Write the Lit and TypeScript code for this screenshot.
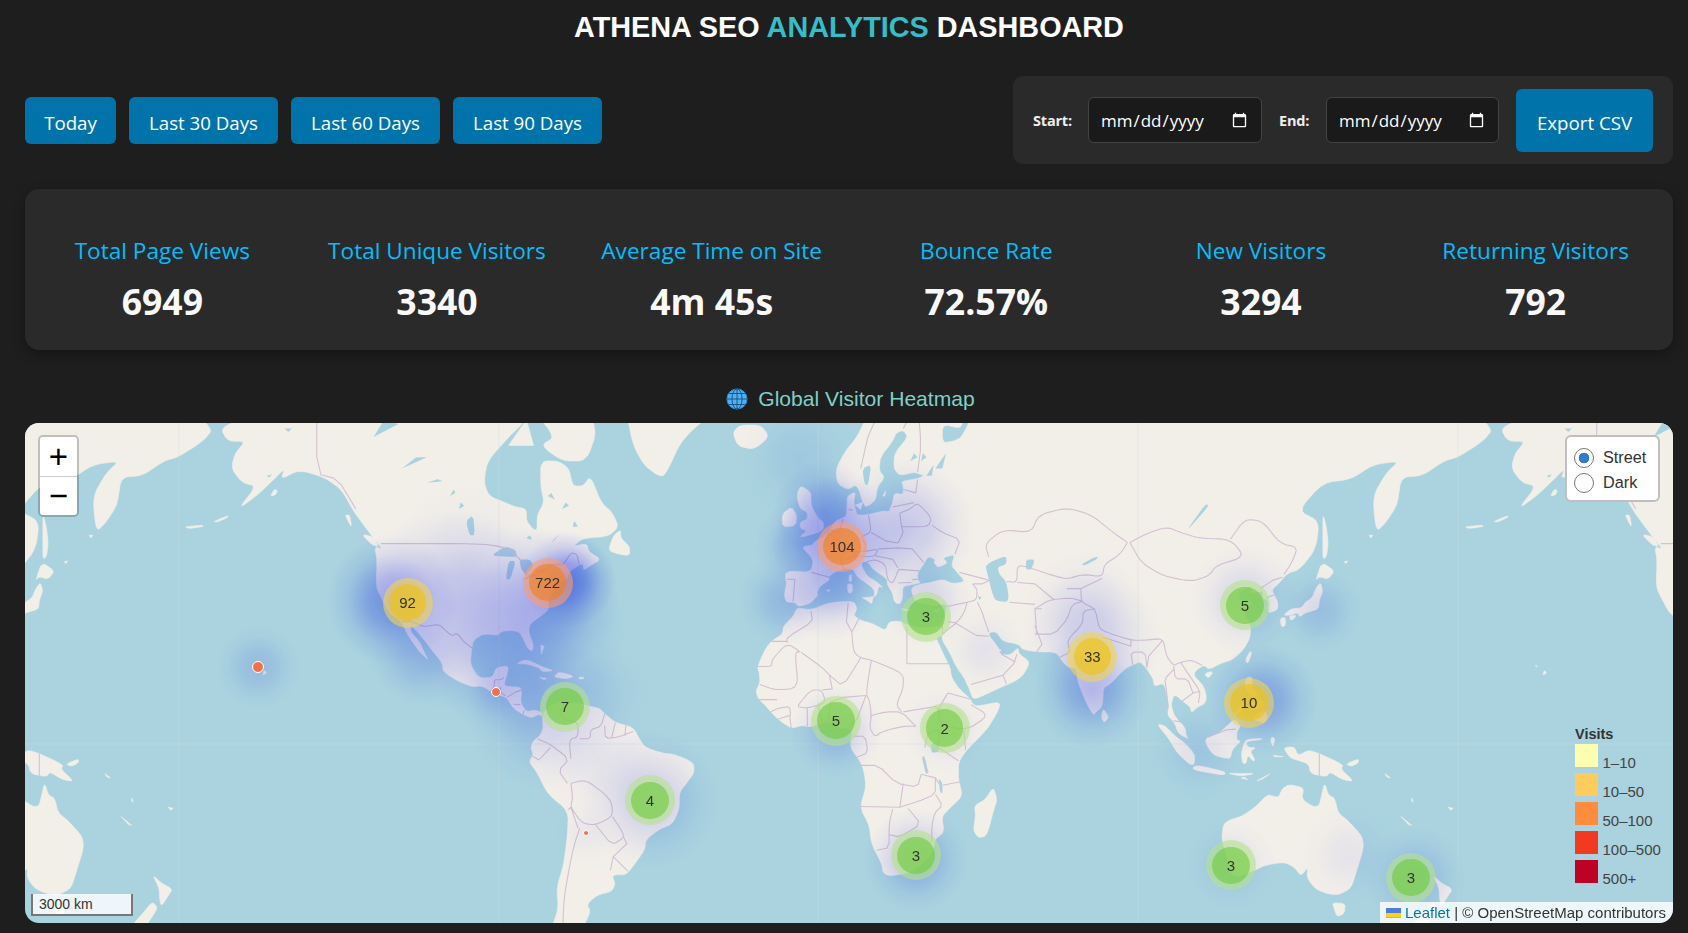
import { LitElement, html, css, svg } from "lit";
import { customElement } from "lit/decorators.js";

type P = number[];
const flat = (a: number[]): P[] => {
  const o: P[] = [];
  for (let i = 0; i < a.length; i += 2) o.push([a[i], a[i + 1]]);
  return o;
};

const LAND: number[][] = [
  // North America
  [-168,66,-163,67,-166,69,-156,71.5,-141,70,-125,70,-110,68,-95,68,-90,70,-85,70,-82,67,-87,65,-93,62,-94,59,-92.5,57,-88,56,-85,55.3,-82,55,-82,53,-80,51.5,-79,51.5,-79,54,-77,56,-78,58.5,-78,62,-73,62,-70,61,-69,58.5,-66,58.5,-64,60,-61,56,-58,54.5,-56,52,-59,50.3,-66,50,-69,48.5,-65,49,-64.5,47.5,-61,46,-64,44.8,-66,43.8,-66,45,-67,45,-70,43.5,-70.5,42,-74,40.7,-75,38.5,-76,37,-75.7,35.3,-78,33.8,-81,32,-81.4,30,-80,26.8,-80.4,25.2,-81.7,26,-82.7,28,-84,30,-86,30.4,-89,30.2,-90,29.2,-94,29.6,-97,28,-97.5,25,-97.8,22,-96,19,-94.5,18.2,-91.5,18.5,-90.5,21,-87,21.5,-87.5,19,-88.5,16,-84,15.8,-83.3,15,-83.7,11.5,-82,9,-79.5,9.5,-77.3,8.7,-77.5,7.5,-78.5,8.4,-80.5,7.3,-83,8.3,-85.7,10,-87.5,13,-91,13.9,-94.5,16.2,-97,15.8,-101.5,17.5,-105.5,20,-105.5,22,-109,26,-112.5,30,-114.7,31.7,-114.5,30,-112,27.5,-110.3,24,-109.5,23,-112,25,-114,27.5,-115.5,29.5,-117.1,32.5,-120.5,34.5,-122.5,37.5,-124.3,40.3,-124,46,-124.7,48.4,-122.5,48,-125,50,-128,52.5,-130.5,54.5,-134,58,-139,59.8,-146,60.8,-151,59.5,-150,61,-154,59,-158,57,-163,55,-158,58.5,-162,59,-165,61,-164,63,-161,64.5,-166,64.5],
  // Greenland, Iceland, Baffin, Southampton, Newfoundland, Vancouver Is.
  [-45,60,-43,60,-38,65,-25,69,-20,75,-60,76,-54,68,-52,64,-49,61.5],
  [-24,65.5,-22,66.4,-16,66.4,-13.7,65,-18,63.5,-22.5,63.9],
  [-78,64,-72,62,-65,62,-62,66,-68,70,-80,72,-90,72,-80,68,-74,65],
  [-87,64,-80,64,-82,67],
  [-59,47.7,-56,47,-53,46.7,-53,48.5,-55.5,50,-55.5,51.5,-57.5,50.5],
  [-128.3,50.7,-125,50.2,-123.5,48.4,-125.5,48.8],
  [-133,54,-131.7,54,-131.2,52,-132,52.8],
  [-64.5,46.9,-62,46.4,-64,46.2],
  // Caribbean
  [-85,22,-82,23.2,-77,21,-74.2,20.2,-77.5,19.9,-78.5,21,-82,22],
  [-74.4,18.5,-72.8,19.9,-68.5,18.7,-71,18],
  [-78.3,18.4,-76.3,18.2,-77,17.8],
  [-67.2,18.5,-65.7,18.4,-66,18,-67.2,18],
  [-78,26.8,-77,26.5,-77.8,24.5],
  // South America
  [-77.3,8.7,-75.5,10.7,-72,12,-71.5,11,-68,11.5,-64,10.5,-61.5,10,-60,8.5,-57,6,-52,4.7,-50,1,-48.5,-1,-44,-2.5,-40,-3,-35,-5.2,-34.8,-8,-37,-11,-39,-13.5,-39,-18,-41,-22,-44.5,-23.2,-48.5,-26,-48.7,-28.5,-52,-32.5,-54,-34.5,-58,-34.5,-57,-36.5,-58,-38.3,-62,-39,-65,-41,-64,-42.5,-65.5,-45,-67,-46,-66,-48,-68.5,-50,-69,-52,-65,-55,-70,-55,-74,-52,-75.5,-47,-73,-42,-73.5,-37.5,-71.5,-32,-70.5,-25,-70.2,-18.5,-76,-14,-79,-8,-81.3,-5,-80,-3,-80.8,-1,-80,1,-78.5,2,-77.3,4,-77.5,7.5],
  // Africa
  [-5.9,35.8,-2,35.2,3,36.9,10,37.3,11,35.5,10,34,12,32.8,15.5,32,19,30.3,20,32.5,23,32.7,25,31.7,29,31,32.3,31.2,34.2,31.3,32.5,30,33.6,27.8,35.5,24,37.2,21,37.5,18.5,39.5,15.5,43,12.5,43.3,11.5,44.5,10.5,51.2,11.8,50.8,9.5,47.5,4,42,-1.5,39.5,-5,39.5,-10,40.7,-14.5,37,-17.8,34.8,-20,35.5,-24,32.8,-26,32.5,-28.5,30,-31.5,26,-34,20,-34.8,18.3,-34,18,-32,15,-27,14.5,-22.5,11.8,-17.5,13.5,-12,13,-8,12,-5,9,-1,9.7,3.5,8.5,4.6,6,4.3,4.5,6.3,1,5.9,-2,4.8,-4.5,5.2,-7.5,4.4,-11,6.7,-13.3,9,-15,11,-16.7,12.5,-17.5,14.7,-16.3,17,-16.5,19.5,-17,21,-16,23.5,-14.5,26.2,-13,27.8,-10,29.5,-9.7,31.5,-7,33.7],
  [49.3,-12,50.4,-15.5,49.5,-18,47.5,-25,45,-25.5,43.7,-23.5,44.3,-20,44,-17,47,-15.5],
  // Eurasia
  [-9.3,43,-8,43.7,-2,43.4,-1.2,46,-4.7,48.4,-1.5,48.7,-1,49.4,1.5,50.2,3.5,51.4,4.7,53,8,53.7,8.2,55.5,8.2,57,10.6,57.7,10,56,10.8,54.4,11,54,14,54,18.5,54.7,20,54.5,21,56,21.5,57.5,24,57.2,24,58.5,23.5,59.2,28,59.6,30,60,27,60.5,23,60,21.3,61,21.5,63,25.3,65,24,65.8,22,65.5,21,64.5,17.5,62.5,17.2,60.7,18.8,59.8,16.6,58.3,16.3,56.5,14.3,55.5,13,55.4,11,58.8,8.5,58,5.5,58.8,5,61,8,63.5,11,65,14.5,68,19,70,25,71,31,70,41,67,40,66,35,66.5,35,64.3,38,64.5,40.5,65,44,68,55,69,68,69,75,72,100,78,140,73,180,69,190,66,187,64.5,180,62.5,176,62,170,60,164,59.8,163,56,162,54.8,160,53,157,51,156,57,160,60.5,163.5,62,156,61.5,150,59.5,142,59,135,54.7,141,53,140,48,135.5,44,132,43.2,129.5,41,127.5,39.7,129.4,37,129.2,35.2,126.5,34.5,126.7,37.5,125,38,125.3,39.5,121.5,39,122,40.7,118,39,119,37.3,122.5,37,119.5,35,121.7,31.5,121.5,28.5,119.5,25.5,116.5,23,113.5,22.2,110,20.5,108.5,21.7,106,20,105.8,18.8,108.5,16,109.3,13,108.8,11.3,106.7,10.3,105,8.7,104.8,10.3,102.5,12,100.9,13.4,100,13.5,99.3,11,100,8.5,101,7,103.3,4.5,103.5,2.5,104.2,1.4,101.3,3,100.3,6,98.3,8,98.7,11,97.7,15.7,97,16.8,94.5,16,94.3,18,92,21.3,90.5,22.5,88.5,21.7,86.8,21,85,19.5,82.3,16.7,80.2,15.5,80.2,13,79.8,10.3,78.2,9,77.5,8.1,76,10.5,74.8,13,73,17.5,72.8,20.8,70.5,21,69,22.3,68,23.7,66.7,25,61.5,25.1,57.5,25.7,56.5,27,52,27.7,50.2,30,48.5,30,48,29.3,50,27,51.5,25,51.2,26,51,24.5,54,24.2,56.3,26.2,56.5,24.5,59.7,22.5,57.7,19,55.3,17.3,52,16,45,12.8,43.5,12.7,42.7,15,41,18.5,39,21,37,25,34.9,28,34.9,29.5,33,28.2,32.6,29.9,32.3,31.2,34.2,31.3,35,32.8,36,34.7,36,36.8,32.5,36.1,30.5,36.7,27.5,37,26.3,39.3,26.5,40.3,29,41,31,41.2,35,42,38,41,41.5,41.5,39,43.5,37.5,44.8,38.5,47,35,46.3,36.5,45.3,33.7,44.4,32.6,45.4,33,46,31,46.6,29.7,45,28,43.3,28,41.8,29,41.2,26.2,40.8,23.8,40.5,23.8,38,23,36.5,21.5,37,21,39,19.4,41,19.5,42,15.5,44,14.3,45.3,13.5,45.6,12.3,45.4,12.3,44.5,14,42.5,16,41.7,18.4,40.2,17,40.5,16.6,38.8,15.7,38,16,39.5,14.5,40.7,11,42.5,10,44,8,44.3,4.5,43.4,3,42.5,3.2,41.8,0.5,40.5,-0.4,39,0,38.6,-2,36.8,-5.5,36,-6.5,37,-9,37,-9.5,38.7,-8.8,41],
  // Europe islands
  [-5.5,50,1.3,51.2,1.7,52.7,0,53.5,-1.5,55,-2,56,-2,57.6,-5,58.6,-6,57,-5,55,-3,54.5,-3,53.3,-5,52.8,-5,51.7,-3,51.3],
  [-10,52,-6.3,52.2,-6,54,-7.5,55.3,-10,54.2],
  [12.5,38,15.6,38.2,15.1,36.7],
  [8.2,41,9.7,41,9.6,39.2,8.5,39],
  [8.7,42.7,9.5,43,9.4,41.5,8.8,41.5],
  [23.5,35.5,26.2,35.2,24.7,35],
  [32.4,35,34.5,35.6,33.7,34.7],
  [2.4,39.6,3.4,39.8,3,39.3],
  [18.2,57,19,57.8,18.8,57],
  [10.5,55.6,12.5,56,12,54.9],
  // Japan etc.
  [130.9,34,133,35.5,136,35.7,137,37,139,38,140,40,141.3,41.3,142,39.5,141,37.5,140.8,35.5,139,35,136.8,34.5,135.5,33.6,135,34.6,132.5,34],
  [140,41.8,141.7,45.4,145.3,43.7,143.5,42,141,42.5],
  [130,33.3,131.5,33.5,131.4,31.5,130.3,31.3],
  [132.5,33.9,134.5,34,134,33.3,133,32.8],
  [142,54.2,143,52,143.5,49,143,46.5,142,46,142,50],
  [121.5,25.2,122,24.8,120.9,22,120.2,23],
  [108.7,19.3,110.5,20,111,19.5,109.7,18.2],
  // Philippines
  [120.5,18.5,122.2,18.4,122,16,124,13,121.5,13.7,120,16],
  [122,7,123.5,8.5,125.5,9.8,126.5,7.5,125.5,5.8,124,6.5],
  [122,11.7,125,12.5,125.5,10.5,123,9.5],
  [117.2,8.4,119.5,11.3,119.7,10.5,117.7,8.3],
  // Indonesia
  [95.3,5.6,97.5,5.2,100.5,2.2,103.5,0,106,-3,105.8,-5.8,104.5,-5.7,101,-2.5,98.5,1.7],
  [105.2,-6.8,106.5,-6,110.5,-6.8,114.5,-7.8,114.4,-8.7,110,-8.1,106.5,-7.4],
  [109,1.5,111.3,2.5,113,3.2,115.5,5.5,117,7,119,5.2,117.8,3.5,117.8,1,119,0.9,116.5,-1.5,116,-4,114.5,-4,111.5,-3.2,110,-1.5,109.2,0],
  [119.5,-5.5,120.4,-5.5,120.9,-3,122.5,-5,122.8,-4.2,121.5,-2,123.3,-1,121,-1,120.2,0.7,124.5,1.2,125,1.6,120.5,1.3,119.7,0,119,-3],
  [115,-8.2,119,-8.3,123,-8.3,119,-9],
  [123.5,-10.3,127,-8.4,125,-9.8],
  [119,-9.5,120.8,-10,120,-9.3],
  [127.5,2,128.5,1.5,128,-0.8,127.4,0.5],
  [128,-3.2,130.8,-3.5,128.5,-3.6],
  [131,-1,134,-0.8,135,-3.3,138,-1.7,141,-2.7,145,-4.5,147.8,-6,147,-7,150.8,-10.5,147.5,-10,144,-7.8,143,-9.2,138.5,-8.3,138,-5.5,133,-4,132,-2.8],
  [148.5,-5.6,152,-4.2,152,-5.3,150,-6.3],
  [79.8,8.5,80.3,9.8,81.8,7.5,80.5,6,79.9,7],
  // Oceania
  [114,-22,113.5,-26,115,-30,115.7,-34,118,-35,124,-33,126,-32.2,131,-31.5,134,-32.7,135.8,-34.8,137.8,-32.7,137.5,-35.2,140,-37.8,143.5,-38.8,146.5,-39,150,-37.5,151.5,-33.5,153.5,-28,153,-25,149,-21,146.3,-19,145.3,-15,143.5,-14.2,142.5,-10.8,141.7,-14,141,-17,139.5,-17.5,136,-15.3,136.7,-12.2,132.5,-11.3,130.5,-12.5,129.5,-15,126.5,-14,124,-16.5,122.2,-18,119,-20,116,-20.8],
  [144.7,-40.7,148.3,-40.9,148,-43,146,-43.6,145.2,-42],
  [172.8,-34.5,175.5,-36.5,178.5,-37.7,177,-39.5,175.3,-41.5,174.8,-39.8,174.7,-37.5],
  [172.7,-40.5,174.3,-41.7,172.7,-43.7,171,-45.5,168,-46.7,166.5,-45.8,170,-43],
  [164,-20,167,-22.3,166,-22],
  [177.2,-17.5,178.6,-17.8,178,-18.3],
  [167,-15,167.4,-16,167,-16],
  [159.5,-8.3,161,-9.5,160,-9.2],
  [-156,19,-155,19.7,-155.8,20.2,-156,19.5],
  [-158.2,21.6,-157.7,21.3,-158.1,21.3],
  // Aleutians & Kurils
  [-170,52.9,-166,53.9,-166,53.6,-169,52.8],
  [-178,52,-173,52.3,-173,52,-177,51.7],
  [155,50.5,156,50.5,155.5,50],
  [148,45.5,149,45.7,148.5,45.2],
  [-153,58,-152,57.9,-152.5,57.2,-154,57],
];

const WATER: number[][] = [
  [-92,46.7,-88,48.5,-85,47.8,-84.7,46.5,-87,46.5],
  [-87.8,42,-86.5,42,-85,45.7,-87,45.7],
  [-84,46,-81,46,-80,44.7,-82,43,-83.5,44],
  [-83.3,41.7,-79,42.8,-79,43,-81.5,42.7],
  [-79.7,43.3,-76.3,43.5,-76.5,44.2,-79,43.9],
  [-98,50.5,-96.5,50.5,-97,54,-99,53],
  [-117,61,-110,62.5,-113,62.5],
  [-125,65,-118,66.5,-122,67],
  [-110,59,-105.5,59.2,-107,59.5],
  [-75,49,-73,50.5,-72,51,-74,50],
  [-103.5,57,-102,57.5,-102.5,58],
  [-101,55,-99.5,55.5,-100.5,56],
  [-72,55,-70,55.5,-71,56],
  [-76,57,-74,56.5,-75,57.5],
  [-69,52,-67.5,52,-68.5,53],
  [-82,50,-80.5,49.7,-81,50.5],
  [-155,60,-153.5,60.2,-154.5,59.7],
  [-150,66,-148,66,-149,65.6],
  [47,45,53,46.8,53,45,50.5,44.5,51,43,53,41.5,53.8,37,50,37.3,49,39,47.7,43],
  [58.5,46,61,46,60,44,58.5,44],
  [74,45,78,46.5,79,46.3,75,44.8],
  [104,51.5,110,55.5,109,55.8,105,52.5],
  [31.7,0.2,34,0.3,34,-2.2,32,-2.5],
  [29.2,-3.5,30,-3.5,31,-8,30.3,-8.5],
  [34,-9.5,35,-11,35,-14,34.2,-13],
  [12.5,61,15,61.5,14,58.5,13,59],
  [30.5,60,32.5,61.5,32,60],
  [33,61,36,63,35,61],
  [45,38.5,46,38,45.3,37.5],
  [26,62,28,62.5,27,63],
  [29,62,30.5,62.5,29.5,63],
];

const BORDERS: number[][] = [
  [-123,49,-95,49,-88,48.3,-84.5,46.5,-82.5,45,-82.5,42.8,-79,43,-76,44.3,-74.7,45,-71.5,45,-69.5,47.3,-67.8,47,-67.2,45],
  [-141,70,-141,60.3,-135,59.5,-130,55],
  [-117.1,32.5,-114.7,32.7,-111,31.3,-108,31.7,-106.5,31.8,-103,29,-101.5,29.8,-99.5,27.5,-97.2,26],
  [-92.2,14.5,-91,16,-91,17.8,-89.1,17.8,-88.3,18.4],
  [-89.2,15.9,-89.3,14.4,-87.8,13.4],
  [-87.5,13,-85,14.5,-83.2,15],
  [-85.7,11.1,-83.7,11],
  [-83,8.3,-82.6,9.5],
  [-77.3,8.7,-77.9,7.2],
  [-71.3,11.8,-72.5,9,-72,7,-67.5,6.2,-67.5,2,-70,1.2,-69.5,-4.2],
  [-60,8.5,-61,5,-64,4,-64,1.5,-67,1.5],
  [-60,5.2,-59.8,1.5,-56,2,-52,3.5],
  [-57,6,-58,2],
  [-54,5.7,-54.3,2.3],
  [-80.3,-3.4,-78.5,-4.5,-75.3,-1],
  [-78.8,1.4,-75.3,-0.1,-70,-4.2,-73,-7.5,-70.5,-11],
  [-69.5,-11,-65.4,-10,-60.2,-13.7,-58,-16.3,-57.8,-20,-62.5,-22.2,-66.3,-21.8,-69.6,-17.5,-69,-15,-69.5,-11],
  [-67,-23,-68.5,-27,-70,-33,-71.5,-40,-72,-50,-69,-52],
  [-70.4,-18.3,-69.5,-17.5],
  [-69.5,-17.5,-67.5,-23],
  [-57.8,-20,-55,-24,-54.6,-25.5,-58,-27.3,-62.5,-22.2],
  [-58.4,-33.5,-57.6,-30.2,-53.4,-33.7],
  [-57.6,-30.2,-53.8,-27,-54.6,-25.5],
  // Africa
  [-2,35,-1.5,32.5,-8.7,28.7,-8.7,27.3],
  [-13,27.7,-8.7,27.7],
  [-17,21.3,-13,21.3,-13,23,-8.7,27.3,-4.8,25,-6.5,25,-5.5,15.5,-12,15,-16.3,16.5],
  [-4.8,25,1.2,21,3.2,19,7,16,12,23.5],
  [9.5,30,8,32.5,8.5,36.9],
  [9.5,30,10,25,12,23.5,15,23,24,19.5,24,15.5,22,11,23.5,9],
  [11.5,33.2,9.5,30],
  [25,31.5,25,22,37,22],
  [15,23,13.5,14,14.5,12,15,8,14.5,4.5,16,2,18,3.5,24,5,27.5,5],
  [3.6,11.7,7,13,13.5,13.5],
  [3.2,19,4,15.3,1,15],
  [-5.5,10.4,-3,10,2.3,11.5,1,15,-2,15,-5.5,11,-5.5,10.4],
  [-16.7,12.4,-11.5,12.4],
  [-13.3,9,-11.2,10,-8,10.5,-7.7,8],
  [-11.5,6.9,-8,8,-7.5,4.4],
  [-3,5,-3,10],
  [1.2,6,0,11],
  [2.7,6.4,3.6,11.7],
  [8.5,4.6,11,7,13.5,13.5],
  [9.7,2.2,13.3,2.2,14,-2.5,11,-3.7],
  [15,8,19,9,23.5,9,27.5,5],
  [24,9,33,10.5,34,9.5],
  [36.5,14.2,34,10,34,8,35,5,42,4,48,8,43,11],
  [36.5,14.2,43,12.5],
  [41,4,41.5,-1.7],
  [34,4,34,0],
  [34,-1,39.5,-4.7],
  [30,-1,31,3,34,4],
  [29.5,-4,31,-8],
  [12,-6,17,-6,22,-11,28,-12,29,-8.5],
  [12,-17.3,23,-17.5,24,-11],
  [29,-8.5,33,-9.5,34,-11],
  [23,-17.5,28,-16,33,-14,33,-9.5],
  [35,-11.5,40.5,-10.5],
  [33,-14,35,-17,32.8,-19,32,-22.5,32,-26.5],
  [16.5,-28.6,20,-28,20,-22,21,-18],
  [20,-24.7,23,-25.3,29,-22,25.3,-17.8],
  // Europe
  [-1.8,43.4,3.2,42.4],
  [-8.8,42,-6.5,42,-7,37.2],
  [2.5,51,6,49.5,8,49,7.5,47.5,6,46.2,7.5,43.8],
  [7.5,47.5,10,47.5,10.5,46.5,8,46],
  [7,46,10.5,46.8,13.7,46.5],
  [14.2,54,15,51,12,50.3,13.5,48.7,13,47.5,10,47.5],
  [7,53.3,6,51,3.4,51.4],
  [8.6,54.9,9.8,54.8],
  [15,51,19,49.5,22.5,49.1],
  [13,47.5,17,48,16,46.7,13.7,46.5],
  [17,48,22.5,48.2],
  [22.5,49.1,24,51,23.5,52,23,54.3],
  [23.5,52,31,52,32,53.5,28,56,26,55,23,54.3],
  [21,55.3,27,56],
  [24,58,27.5,57.5,28,59.5],
  [32,52.3,35,51,40,49.7,38.5,47],
  [22.5,48.2,26.5,48,29.7,45.4],
  [22.7,44,28.5,43.7],
  [16,46.7,21,46,22.5,44.3],
  [22.5,41.2,26.2,41.3],
  [13.7,45.5,16,46,19,45,19.5,42,21,41,22.7,44],
  [26.5,41.9,28,42],
  [36,36,42,37,44.5,37.5,44.8,39.7,43.5,41],
  [39.8,43.4,48,41.8],
  [43.5,41,46,41,48.5,41.8],
  [23,68,20,69],
  [12,61,14,65,18,68.5],
  [24,66,28,69,29,64,28,60.5],
  // Middle East / Asia
  [44.8,37,46,35,48,30],
  [42,37,41,34.5,39,32.2,36.5,32.5],
  [39,32.2,37,31,35,29.5],
  [39,32,44.5,29.2,48,29],
  [43,16.5,52,19,53,16.7],
  [52,19,55,22,56,24.5],
  [51.5,24.5,55.5,22.5],
  [35,29.5,35,33.2],
  [61,31.5,63,27,61.5,25.1],
  [61.5,29.5,61,35.5,63,35.5],
  [53.9,37,61,36.5],
  [61,35.5,65,37.5,71,38,74.5,37.2],
  [48,46.5,47,49,52,51.5,60,51,62,54,70,55.2,77,54,83,51,87,49.2],
  [53,41.5,56,41.3,56,45,61,44,65,43,70,42,74.5,43,80,42.5,80.5,45,85,47,87,49.2],
  [56,41.3,61,41,66.5,37.5],
  [70,40,74,40,80,42.2],
  [74,40,74,37,78,35.5,79,31,81,30,88,28,92,28,97,28.5,98,24,100,21.5,102,22.4,105,23,108,21.6],
  [68,23.7,71,25,70,28,74.5,32,74.5,35,78,35.5],
  [61,29.5,66.5,29.5,70,33,71.5,36.5,74.5,37.2],
  [80,28.8,88,26.5,88,28],
  [88.5,21.7,88,25,92,25,92.5,21],
  [92.5,21,93,24,97,28],
  [98.5,10,98,15,97.5,18,100,20.5],
  [100,21.5,100.5,18,104,18,105.5,14.2],
  [102,22.4,104,19.5,107.5,14.7,107,11.5],
  [102.5,12,105.5,14.2,107.5,14.7],
  [100,6.5,102,6.2],
  [87.7,49.2,92,50.7,98,52,102,51,107,50,116,49.8,120,46.5,112,44.8,110,42.7,105,41.5,97,42.7,91,45.3,87.7,49.2],
  [116,49.8,120,53.3,125,53,130,49,135,48.3,133,45,131,43],
  [124.3,40,128,41.8,130.6,42.4],
  [126,38,128.3,38.6],
  [109.7,2,115,4,117.5,4.2],
  [141,-2.7,141,-9],
];

const WORLD = 1280;
const LON0 = 818;
const EQ = 744;
const px = (lon: number) => LON0 + (lon / 360) * WORLD;
const py = (lat: number) =>
  EQ - (WORLD / (2 * Math.PI)) * Math.log(Math.tan(Math.PI / 4 + (lat * Math.PI) / 360));

// corner cutting, so the hand-placed outlines read as coast rather than as polygons
const soften = (pts: P[], closed: boolean, q = 0.2): P[] => {
  const n = pts.length;
  if (n < 3) return pts;
  const out: P[] = [];
  if (!closed) out.push(pts[0]);
  const last = closed ? n : n - 1;
  for (let i = 0; i < last; i++) {
    const a = pts[i];
    const b = pts[(i + 1) % n];
    out.push([a[0] + (b[0] - a[0]) * q, a[1] + (b[1] - a[1]) * q]);
    out.push([a[0] + (b[0] - a[0]) * (1 - q), a[1] + (b[1] - a[1]) * (1 - q)]);
  }
  if (!closed) out.push(pts[n - 1]);
  return out;
};

const toPath = (rings: number[][], closed: boolean) => {
  let d = "";
  for (const r of rings) {
    const base = flat(r).map(([a, b]) => [px(a), py(b)]);
    const smooth = base.length >= 6 ? soften(soften(base, closed), closed) : base.length >= 4 ? soften(base, closed) : base;
    for (const off of [-WORLD, 0, WORLD]) {
      d += "M" + smooth.map(([x, y]) => `${(x + off).toFixed(1)} ${y.toFixed(1)}`).join("L") + (closed ? "Z" : "");
    }
  }
  return d;
};

const LAND_D = toPath(LAND, true);
const WATER_D = toPath(WATER, true);
const BORDER_D = toPath(BORDERS, false);

// x, y, radius, strength
const HEAT: number[][] = [
  [568, 580, 48, 0.7], [548, 600, 72, 0.35], [520, 630, 105, 0.3], [450, 610, 100, 0.26], [470, 570, 85, 0.1],
  [392, 600, 65, 0.55], [420, 655, 50, 0.2], [510, 670, 72, 0.18], [545, 712, 78, 0.24], [600, 690, 50, 0.08],
  [258, 667, 42, 0.2], [496, 692, 30, 0.12], [586, 833, 32, 0.06], [650, 800, 70, 0.24], [600, 760, 60, 0.07],
  [825, 512, 52, 0.42], [842, 547, 70, 0.44], [905, 528, 70, 0.3], [830, 590, 50, 0.32], [785, 600, 46, 0.24],
  [800, 545, 45, 0.28], [800, 460, 60, 0.1],
  [926, 600, 46, 0.2], [985, 650, 42, 0.09], [836, 732, 46, 0.26], [945, 730, 42, 0.12], [916, 860, 52, 0.34],
  [1092, 640, 70, 0.2], [1092, 690, 58, 0.4], [1085, 610, 60, 0.12], [1245, 600, 55, 0.18], [1320, 610, 42, 0.18],
  [1262, 700, 56, 0.42], [1200, 750, 50, 0.12], [1231, 865, 46, 0.12], [1350, 855, 50, 0.08], [1415, 878, 52, 0.22],
];

const CLUSTERS: { x: number; y: number; n: number; tone: string }[] = [
  { x: 407.6, y: 602.7, n: 92, tone: "y" }, { x: 547.6, y: 582.7, n: 722, tone: "o" },
  { x: 564.9, y: 706.7, n: 7, tone: "g" }, { x: 842, y: 546.7, n: 104, tone: "o" },
  { x: 925.9, y: 616.7, n: 3, tone: "g" }, { x: 1092.3, y: 656.7, n: 33, tone: "y" },
  { x: 835.9, y: 720.7, n: 5, tone: "g" }, { x: 944.6, y: 728, n: 2, tone: "g" },
  { x: 650, y: 800.3, n: 4, tone: "g" }, { x: 915.9, y: 855.3, n: 3, tone: "g" },
  { x: 1244.8, y: 605.3, n: 5, tone: "g" }, { x: 1248.9, y: 702.7, n: 10, tone: "y" },
  { x: 1230.9, y: 865.3, n: 3, tone: "g" }, { x: 1410.9, y: 877.7, n: 3, tone: "g" },
];

const DOTS: number[][] = [[257.6, 666.7, 6], [496.4, 691.7, 5], [586, 833, 3]];

const LEGEND = [
  ["#ffffb2", "1–10"], ["#fecc5c", "10–50"], ["#fd8d3c", "50–100"], ["#f03b20", "100–500"], ["#bd0026", "500+"],
];

@customElement("world-map")
class WorldMap extends LitElement {
  static styles = css`
    :host { display: block; position: relative; height: 500px; border-radius: 14px; overflow: hidden; background: #aad3df;
      font-family: "Liberation Sans", Arial, sans-serif; isolation: isolate; }
    svg.base { display: block; width: 100%; height: 100%; }
    .land { fill: #f2efe9; stroke: #f2efe9; stroke-width: .6; }
    .water { fill: #aad3df; }
    .border { fill: none; stroke: #d4c1d4; stroke-width: 1.1; stroke-linejoin: round; }
    .grid { stroke: rgba(205, 222, 222, .4); stroke-width: 1; }
    .heat { mix-blend-mode: multiply; }
    .dot { position: absolute; border-radius: 50%; background: #f0704a; border: 1.5px solid #fff; box-sizing: border-box; transform: translate(-50%, -50%); }
    .cluster { position: absolute; width: 50px; height: 50px; margin: -25px 0 0 -25px; border-radius: 50%; display: grid; place-items: center; }
    .cluster span { width: 37.5px; height: 37.5px; border-radius: 50%; display: grid; place-items: center; font-size: 15px; color: #333; }
    .g { background: rgba(181, 226, 140, .6); } .g span { background: rgba(110, 204, 57, .6); }
    .y { background: rgba(241, 211, 87, .6); } .y span { background: rgba(240, 194, 12, .6); }
    .o { background: rgba(253, 156, 115, .6); } .o span { background: rgba(241, 128, 23, .6); }
    .zoom { position: absolute; left: 13px; top: 12px; width: 41px; border: 2.5px solid rgba(0, 0, 0, .2); border-radius: 5px; background-clip: padding-box; box-sizing: border-box; }
    .zoom div { height: 38px; background: #fff; display: grid; place-items: center; font: 400 33px/1 "Liberation Sans", sans-serif; color: #000; }
    .zoom div:first-child { height: 38.5px; border-bottom: 1px solid #ccc; border-radius: 3px 3px 0 0; }
    .zoom div:last-child { border-radius: 0 0 3px 3px; }
    .layers { position: absolute; right: 13px; top: 12px; width: 95px; height: 67px; box-sizing: border-box; border: 2px solid rgba(0, 0, 0, .25); border-radius: 6px; background: #fff;
      padding: 8px 0 0 7px; font-size: 16.25px; color: #333; }
    .layers label { display: flex; align-items: center; gap: 9px; height: 25px; }
    .layers input { appearance: none; margin: 0; width: 20px; height: 20px; box-sizing: border-box; border: 1px solid #777; border-radius: 50%; background: #fff; }
    .layers input:checked { background: radial-gradient(circle, #2f7cc8 0 5px, #fff 5.6px); }
    .legend { position: absolute; left: 1550px; top: 301px; font-size: 15px; color: #444; }
    .legend b { display: block; font-size: 14.5px; line-height: 20px; color: #333; }
    .legend .row { display: flex; align-items: flex-end; height: 29px; }
    .legend i { display: block; width: 23px; height: 23px; margin-right: 4.5px; margin-bottom: 6px; }
    .legend em { font-style: normal; line-height: 1; margin-bottom: 3px; }
    .scale { position: absolute; left: 6px; bottom: 7px; width: 102px; height: 22px; box-sizing: border-box; border: 2px solid #777; border-top: 0; background: rgba(255, 255, 255, .8);
      font-size: 14px; line-height: 20px; padding-left: 6px; color: #333; }
    .attr { position: absolute; right: 0; bottom: 0; height: 21px; width: 293px; box-sizing: border-box; background: rgba(255, 255, 255, .8); font-size: 15px; line-height: 21px; padding-left: 6px; color: #333;
      display: flex; align-items: center; gap: 4px; white-space: nowrap; }
    .attr a { color: #0078a8; text-decoration: none; }
    .attr svg { width: 15px; height: 10px; display: block; }
  `;

  render() {
    return html`
      <svg class="base" viewBox="25 423 1648 500" preserveAspectRatio="none">
        <defs>
          <radialGradient id="hg">
            <stop offset="0" stop-color="#6070ff" stop-opacity="1"></stop>
            <stop offset=".35" stop-color="#6070ff" stop-opacity=".72"></stop>
            <stop offset=".7" stop-color="#6070ff" stop-opacity=".22"></stop>
            <stop offset="1" stop-color="#6070ff" stop-opacity="0"></stop>
          </radialGradient>
        </defs>
        <path class="land" d=${LAND_D}></path>
        <path class="water" d=${WATER_D}></path>
        <path class="border" d=${BORDER_D}></path>
        ${[179, 499, 818, 1138, 1458].map((x) => svg`<line class="grid" x1=${x} x2=${x} y1="423" y2="923"></line>`)}
        <line class="grid" x1="25" x2="1673" y1="744" y2="744"></line>
        <g class="heat">
          ${HEAT.map(([x, y, r, a]) => svg`<circle cx=${x} cy=${y} r=${r} fill="url(#hg)" opacity=${a}></circle>`)}
        </g>
      </svg>
      ${DOTS.map(([x, y, r]) => html`<div class="dot" style="left:${x - 25}px;top:${y - 423}px;width:${r * 2}px;height:${r * 2}px"></div>`)}
      ${CLUSTERS.map((c) => html`<div class="cluster ${c.tone}" style="left:${c.x - 25}px;top:${c.y - 423}px"><span>${c.n}</span></div>`)}
      <div class="zoom"><div>+</div><div>−</div></div>
      <div class="layers">
        <label><input type="radio" name="base" checked />Street</label>
        <label><input type="radio" name="base" />Dark</label>
      </div>
      <div class="legend">
        <b>Visits</b>
        ${LEGEND.map(([c, t]) => html`<div class="row"><i style="background:${c}"></i><em>${t}</em></div>`)}
      </div>
      <div class="scale">3000 km</div>
      <div class="attr">
        <svg viewBox="0 0 12 8"><rect width="12" height="4" fill="#4c7be1"></rect><rect y="4" width="12" height="3" fill="#ffd500"></rect><rect y="7" width="12" height="1" fill="#e0bc00"></rect></svg>
        <span><a>Leaflet</a> | © OpenStreetMap contributors</span>
      </div>
    `;
  }
}

const STATS = [
  ["Total Page Views", "6949"], ["Total Unique Visitors", "3340"], ["Average Time on Site", "4m 45s"],
  ["Bounce Rate", "72.57%"], ["New Visitors", "3294"], ["Returning Visitors", "792"],
];

@customElement("app-root")
class AppRoot extends LitElement {
  static styles = css`
    :host { display: block; min-height: 933px; box-sizing: border-box; background: #1e1e1e; padding: 0 15px 10px 25px; color: #f5f5f5; font-family: "Open Sans", "Noto Sans", sans-serif; overflow: hidden; }
    h1 { margin: 0; height: 76px; padding-top: 10px; box-sizing: border-box; font: bold 28.8px/34px "Liberation Sans", Arial, sans-serif; text-align: center; color: #fff; }
    h1 span { color: #35bec8; }
    .controls { display: flex; justify-content: space-between; align-items: center; }
    .quick { display: flex; gap: 13px; }
    button { border: 0; border-radius: 6px; background: #0073aa; color: #fff; font: 400 18.7px "Open Sans", sans-serif; padding: 4px 0 0; }
    .quick button { height: 47px; width: 149px; }
    .quick button:first-child { width: 91px; }
    .dates { display: flex; align-items: center; width: 660px; height: 88px; box-sizing: border-box; padding: 0 20px; background: #2a2a2a; border-radius: 10px; }
    .dates label { font-weight: 700; font-size: 14.5px; letter-spacing: -.2px; color: #eee; }
    .dates label.s { width: 55px; }
    .dates label.e { width: 47px; margin-left: 17px; }
    input[type="date"] { width: 174px; height: 46px; box-sizing: border-box; background: #1a1a1a; color: #fff; border: 1px solid #444; border-radius: 6px; padding: 0 11px; font: 400 17px "Open Sans", sans-serif; color-scheme: dark; }
    .e + input[type="date"] { width: 173px; }
    .export { width: 137px; height: 63px; margin-left: 17px; }
    .stats { display: grid; grid-template-columns: repeat(6, 1fr); height: 161px; box-sizing: border-box; padding-top: 48px; margin-top: 25px; align-items: start; background: #2a2a2a; border-radius: 14px; box-shadow: 0 4px 12px rgba(0, 0, 0, .35); }
    .stat { text-align: center; }
    .stat .l { font-size: 22.6px; line-height: 28px; color: #00bfff; }
    .stat .v { margin-top: 13px; font-size: 35.6px; line-height: 46px; font-weight: 700; color: #f8f8f8; }
    h2 { margin: 0; height: 73px; display: flex; align-items: center; justify-content: center; gap: 10px; padding: 24px 0 0 3px; box-sizing: border-box; font: 400 21.1px "Liberation Sans", Arial, sans-serif; color: #7fd1c7; }
    h2 svg { width: 22px; height: 22px; }
  `;

  render() {
    return html`
      <h1>ATHENA SEO <span>ANALYTICS</span> DASHBOARD</h1>
      <div class="controls">
        <div class="quick">
          <button>Today</button>
          <button>Last 30 Days</button>
          <button>Last 60 Days</button>
          <button>Last 90 Days</button>
        </div>
        <div class="dates">
          <label class="s">Start:</label><input type="date" />
          <label class="e">End:</label><input type="date" />
          <button class="export">Export CSV</button>
        </div>
      </div>
      <div class="stats">
        ${STATS.map(([l, v]) => html`<div class="stat"><div class="l">${l}</div><div class="v">${v}</div></div>`)}
      </div>
      <h2>
        <svg viewBox="0 0 24 24" fill="none" stroke="#17507f" stroke-width="1">
          <circle cx="12" cy="12" r="11" fill="#4db0f2" stroke="#2f8fdc"></circle>
          <ellipse cx="12" cy="12" rx="5.5" ry="11"></ellipse>
          <path d="M12 1v22M1 12h22M3 6h18M3 18h18"></path>
        </svg>
        Global Visitor Heatmap
      </h2>
      <world-map></world-map>
    `;
  }
}
